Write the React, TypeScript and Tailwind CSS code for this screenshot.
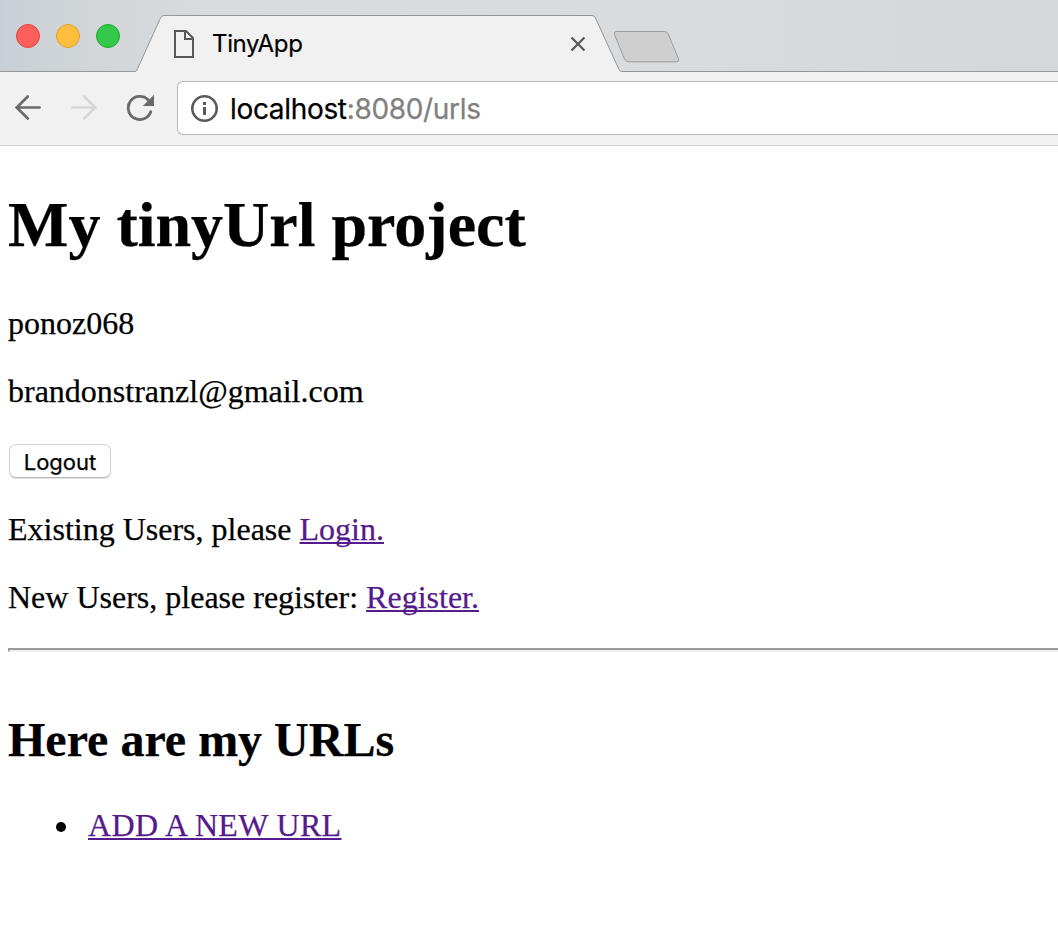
import React from "react";

function TabShapes() {
  return (
    <svg className="absolute inset-0 h-[72px] w-[1058px]" viewBox="0 0 1058 72" fill="none">
      <path
        d="M0 71.5H135Q136.300 71.500 137 70L160.500 18Q162 15.500 164 15.500H592Q594.200 15.500 595.500 18L619 69.500Q620 71.500 621.500 71.500H1058V73H0Z"
        fill="#f1f1f1"
      />
      <path
        d="M0 71.5H135Q136.300 71.500 137 70L160.500 18Q162 15.500 164 15.500H592Q594.200 15.500 595.500 18L619 69.500Q620 71.500 621.500 71.500H1058"
        stroke="#949697"
      />
      <path
        d="M616 31.500H664.500Q667 31.500 668.200 34L678.400 58.500Q679.500 61.800 677 61.800H629Q626 61.800 624.500 59L614.500 34.500Q613.500 31.500 616 31.500Z"
        fill="#cfcfcf"
        stroke="#9b9b9b"
      />
    </svg>
  );
}

function TabStrip() {
  return (
    <header className="relative flex h-[72px] bg-[linear-gradient(to_right,#c6cfd8_0px,#ccd3d6_35px,#d2d6d9_100px,#d9dadb_200px,#d9dbdd_620px,#d6d7d8_1058px)]">
      <TabShapes />
      <div className="relative flex h-[72px] gap-4 pl-4 pt-6">
        <span className="size-6 rounded-full border border-[#e2443f] bg-[#fd605b]" />
        <span className="size-6 rounded-full border border-[#dfa02f] bg-[#febd3f]" />
        <span className="size-6 rounded-full border border-[#1eaa34] bg-[#34c94a]" />
      </div>
      <div className="relative ml-[53px] flex h-[56px] w-[413px] items-center self-end">
        <svg className="-mt-[1px] h-[30px] w-[22px]" viewBox="0 0 22 30" fill="none" stroke="#595959" strokeWidth="2">
          <path d="M2 2H13L20 9V28H2Z" />
          <path d="M12 2V10H20" />
        </svg>
        <span className="ml-[17px] flex-1 font-['Inter',sans-serif] text-[24px] leading-7 tracking-[-0.35px] text-black [-webkit-text-stroke:0.2px]">
          TinyApp
        </span>
        <svg className="h-4 w-4" viewBox="0 0 16 16" fill="none" stroke="#5a5a5a" strokeWidth="2.300">
          <path d="M1.500 1.500L14.500 14.500M14.500 1.500L1.500 14.500" />
        </svg>
      </div>
    </header>
  );
}

function Toolbar() {
  return (
    <nav className="flex h-[74px] items-start border-b border-[#d0d0d0] bg-[#f1f1f1] pl-[14px]">
      <svg className="mt-[22px] h-7 w-7" viewBox="0 0 28 28" fill="none" stroke="#6a6a6a" strokeWidth="2.700" strokeLinecap="round">
        <path d="M25.600 13.500H3M13.800 2.500L2.700 13.500L13.800 24.500" />
      </svg>
      <svg className="ml-[28px] mt-[22px] h-7 w-7" viewBox="0 0 28 28" fill="none" stroke="#d6d6d6" strokeWidth="2.700" strokeLinecap="round">
        <path d="M2.400 13.500H25M14.200 2.500L25.300 13.500L14.200 24.500" />
      </svg>
      <svg className="ml-[28px] mt-[22px] h-7 w-7" viewBox="0 0 28 28" fill="none">
        <path d="M22.500 6.200A11.600 11.600 0 1 0 24.800 17.800" stroke="#6a6a6a" strokeWidth="2.800" strokeLinecap="round" />
        <path d="M28 .8V12H16.800Z" fill="#6a6a6a" />
      </svg>
      <div className="ml-[23px] mt-[9px] flex h-[54px] flex-1 items-center rounded-l-[6px] border border-r-0 border-[#b7b7b7] bg-white pl-[12px] pt-[2px]">
        <svg className="-mt-[3px] h-7 w-7" viewBox="0 0 28 28" fill="none">
          <circle cx="14.500" cy="14.500" r="12.200" stroke="#5a5a5a" strokeWidth="2.600" />
          <path d="M14.500 8V11M14.500 13V21" stroke="#5a5a5a" strokeWidth="3" />
        </svg>
        <span className="ml-[12px] font-['Inter',sans-serif] text-[28px] leading-8 tracking-[-0.33px] text-black [-webkit-text-stroke:0.25px]">
          localhost<span className="text-[#808080]">:8080/urls</span>
        </span>
      </div>
    </nav>
  );
}

const linkClass = "text-[#551a8b] underline decoration-2 underline-offset-[2px] [text-decoration-skip-ink:none]";

export default function App() {
  return (
    <div className="h-[932px] w-[1058px] overflow-hidden bg-white">
      <TabStrip />
      <Toolbar />
      <main className="pl-2 pt-[43px] font-['Liberation_Serif',serif] text-[32px] leading-9 text-black [-webkit-text-stroke:0.25px]">
        <h1 className="mb-[44px] text-[64px] font-bold leading-[72px]">My tinyUrl project</h1>
        <p className="mb-8">ponoz068</p>
        <p className="mb-[35px]">brandonstranzl@gmail.com</p>
        <button className="ml-[1px] flex h-[34px] w-[102px] items-center justify-center rounded-[7px] border border-[#d2d2d2] border-b-[#b8b8b8] bg-white pt-[2px] font-['Inter',sans-serif] text-[22px] leading-none shadow-[0_1px_1px_#e2e2e2]">
          Logout
        </button>
        <p className="mb-8 mt-[33px]">
          Existing Users, please <a href="#login" className={linkClass}>Login.</a>
        </p>
        <p className="mb-[33px]">
          New Users, please register: <a href="#register" className={linkClass}>Register.</a>
        </p>
        <hr className="h-1 border-b-2 border-l-2 border-t-2 border-b-[#eeeeee] border-l-[#9a9a9a] border-t-[#9a9a9a]" />
        <h2 className="mt-[61px] text-[48px] font-bold leading-[54px]">Here are my URLs</h2>
        <ul className="mt-10 pl-12">
          <li className="flex items-center">
            <span className="mr-[22px] mt-[3px] size-[10px] rounded-full bg-black" />
            <a href="#new" className={`${linkClass} tracking-[0.33px]`}>ADD A NEW URL</a>
          </li>
        </ul>
      </main>
    </div>
  );
}
